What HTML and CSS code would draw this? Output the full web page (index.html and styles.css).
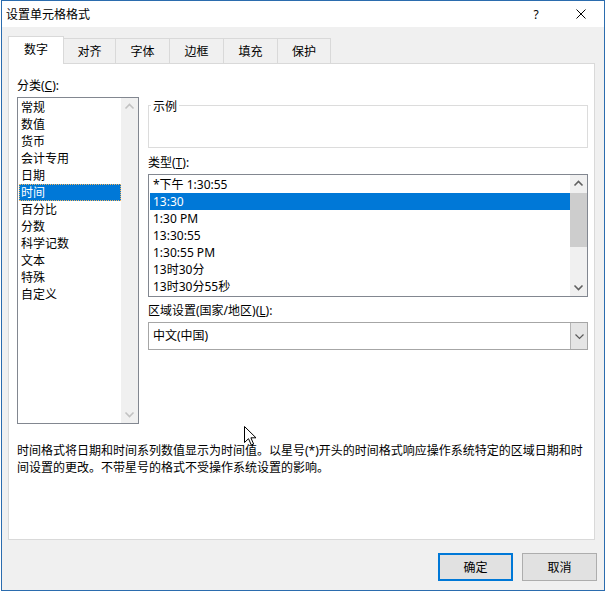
FILE: index.html
```html
<!DOCTYPE html>
<html lang="zh-CN">
<head>
<meta charset="utf-8">
<title>设置单元格格式</title>
<link rel="stylesheet" href="styles.css">
</head>
<body>
<div class="window">
  <div class="titlebar">
    <span class="title">设置单元格格式</span>
    <span class="help">?</span>
    <span class="close"><svg width="10" height="10" viewBox="0 0 10 10"><path d="M0.5 0.5 L9.5 9.5 M9.5 0.5 L0.5 9.5" stroke="#000" stroke-width="1" fill="none"/></svg></span>
  </div>
  <div class="body">
    <div class="tabs">
      <div class="tab active">数字</div>
      <div class="tab t-first">对齐</div>
      <div class="tab">字体</div>
      <div class="tab">边框</div>
      <div class="tab">填充</div>
      <div class="tab t-last">保护</div>
    </div>
    <div class="panel">
      <div class="cols">
        <div class="col-left">
          <div class="label">分类(<u>C</u>):</div>
          <div class="listbox cat">
            <div class="items">
              <div class="item">常规</div>
              <div class="item">数值</div>
              <div class="item">货币</div>
              <div class="item">会计专用</div>
              <div class="item">日期</div>
              <div class="item selected focus">时间</div>
              <div class="item">百分比</div>
              <div class="item">分数</div>
              <div class="item">科学记数</div>
              <div class="item">文本</div>
              <div class="item">特殊</div>
              <div class="item">自定义</div>
            </div>
            <div class="vscroll disabled">
              <span class="arrow"><svg width="17" height="17" viewBox="0 0 17 17"><polyline points="4.5,10.5 8.5,6.5 12.5,10.5" fill="none" stroke-width="1.6"/></svg></span>
              <span class="arrow"><svg width="17" height="17" viewBox="0 0 17 17"><polyline points="4.5,6.5 8.5,10.5 12.5,6.5" fill="none" stroke-width="1.6"/></svg></span>
            </div>
          </div>
        </div>
        <div class="col-right">
          <div class="sample"><span class="legend">示例</span></div>
          <div class="label label-type">类型(<u>T</u>):</div>
          <div class="listbox type">
            <div class="items">
              <div class="item">*下午 1:30:55</div>
              <div class="item selected">13:30</div>
              <div class="item">1:30 PM</div>
              <div class="item">13:30:55</div>
              <div class="item">1:30:55 PM</div>
              <div class="item">13时30分</div>
              <div class="item">13时30分55秒</div>
            </div>
            <div class="vscroll">
              <span class="arrow"><svg width="17" height="17" viewBox="0 0 17 17"><polyline points="4.5,10.5 8.5,6.5 12.5,10.5" fill="none" stroke-width="1.6"/></svg></span>
              <span class="thumb"></span>
              <span class="track"></span>
              <span class="arrow"><svg width="17" height="17" viewBox="0 0 17 17"><polyline points="4.5,6.5 8.5,10.5 12.5,6.5" fill="none" stroke-width="1.6"/></svg></span>
            </div>
          </div>
          <div class="label label-locale">区域设置(国家/地区)(<u>L</u>):</div>
          <div class="combo">
            <span class="combo-text">中文(中国)</span>
            <span class="combo-btn"><svg width="15" height="15" viewBox="0 0 15 15"><polyline points="3.5,5.5 7.5,9.5 11.5,5.5" fill="none" stroke="#5a5a5a" stroke-width="1.2"/></svg></span>
          </div>
        </div>
      </div>
      <p class="desc">时间格式将日期和时间系列数值显示为时间值。以星号(*)开头的时间格式响应操作系统特定的区域日期和时<br>间设置的更改。不带星号的格式不受操作系统设置的影响。</p>
    </div>
    <div class="footer">
      <button class="btn btn-default">确定</button>
      <button class="btn">取消</button>
    </div>
  </div>
  <svg class="cursor" width="13" height="20" viewBox="0 0 13 20"><path d="M0.5 0.5 L0.5 16.5 L4.5 12.7 L7.3 19 L9.6 18 L6.9 11.8 L12 11.8 Z" fill="#fff" stroke="#000" stroke-width="1" stroke-linejoin="miter"/></svg>
</div>
</body>
</html>
```

FILE: styles.css
```css
* {
  box-sizing: border-box;
}

html, body {
  margin: 0;
  padding: 0;
}

body {
  width: 605px;
  height: 592px;
  overflow: hidden;
  background: #ffffff;
  font-family: "Noto Sans", "Noto Sans CJK SC", sans-serif;
  font-size: 12px;
  color: #000000;
}

.window {
  position: relative;
  margin-left: 1px;
  width: 604px;
  height: 591px;
  border: 1px solid #2b6cae;
  background: #f0f0f0;
  display: flex;
  flex-direction: column;
}

/* title bar */
.titlebar {
  height: 26px;
  flex: none;
  background: #ffffff;
  display: flex;
  align-items: center;
  padding: 0 18px 0 4px;
  line-height: 17px;
}

.title {
  flex: 1;
}

.help {
  width: 12px;
  text-align: center;
  font-size: 12px;
}

.close {
  display: flex;
  margin-left: 34px;
}

/* body */
.body {
  flex: 1;
  display: flex;
  flex-direction: column;
  padding: 9px 7px 0 6px;
}

.tabs {
  display: flex;
  align-items: flex-end;
  height: 27px;
  flex: none;
}

.tab {
  height: 25px;
  width: 54px;
  display: flex;
  align-items: center;
  justify-content: center;
  line-height: 17px;
  background: #f0f0f0;
  border-top: 1px solid #d9d9d9;
  border-right: 1px solid #d9d9d9;
}

.tab.t-first {
  width: 52px;
}

.tab.t-last {
  width: 53px;
}

.tab.active {
  position: relative;
  z-index: 1;
  width: 56px;
  height: 28px;
  margin-bottom: -1px;
  padding-bottom: 2px;
  background: #ffffff;
  border: 1px solid #d9d9d9;
  border-bottom: none;
}

.panel {
  height: 477px;
  flex: none;
  margin-right: 2px;
  background: #ffffff;
  border: 1px solid #d9d9d9;
  padding: 13px 6px 0 8px;
}

.cols {
  display: flex;
  gap: 9px;
  align-items: flex-start;
}

.col-left {
  width: 122px;
  flex: none;
}

.col-right {
  width: 440px;
  flex: none;
}

.label {
  height: 17px;
  line-height: 17px;
  white-space: nowrap;
}

.label u {
  text-underline-offset: 1px;
}

.listbox {
  display: flex;
  border: 1px solid #828790;
  background: #ffffff;
  margin-top: 3px;
}

.listbox .items {
  flex: 1;
  padding: 1px 0 1px 1px;
  overflow: hidden;
}

.item {
  height: 17px;
  line-height: 17px;
  white-space: nowrap;
  padding-left: 2px;
}

.type .item {
  padding-left: 3px;
}

.item.selected {
  background: #0078d7;
  color: #ffffff;
}

.item.focus {
  outline: 1px dotted #f4b560;
  outline-offset: -1px;
}

.listbox.cat {
  height: 327px;
}

.listbox.type {
  height: 123px;
}

.vscroll {
  width: 17px;
  flex: none;
  background: #f0f0f0;
  display: flex;
  flex-direction: column;
}

.vscroll .arrow {
  display: flex;
  width: 17px;
  height: 17px;
  flex: none;
}

.vscroll .arrow svg {
  stroke: #606060;
}

.vscroll.disabled {
  justify-content: space-between;
}

.vscroll.disabled .arrow svg {
  stroke: #c2c2c2;
}

.vscroll .thumb {
  display: block;
  height: 54px;
  margin-top: 1px;
  background: #cdcdcd;
  flex: none;
}

.vscroll .track {
  flex: 1;
}

/* sample group */
.sample {
  margin-top: 28px;
  height: 43px;
  border: 1px solid #dcdcdc;
}

.legend {
  display: block;
  width: fit-content;
  margin: -8px 0 0 2px;
  padding: 0 2px;
  line-height: 17px;
  background: #ffffff;
}

.label-type {
  margin-top: 6px;
}

.label-locale {
  margin-top: 5px;
}

.combo {
  margin-top: 3px;
  height: 28px;
  display: flex;
  border: 1px solid #a6a6a6;
  background: #ffffff;
}

.combo-text {
  flex: 1;
  line-height: 26px;
  padding-left: 4px;
}

.combo-btn {
  width: 17px;
  display: flex;
  align-items: center;
  justify-content: center;
  background: #e5e5e5;
  border-left: 1px solid #b5b5b5;
}

.desc {
  margin: 18px 0 0 0;
  line-height: 17px;
  white-space: nowrap;
}

/* footer */
.footer {
  display: flex;
  justify-content: flex-end;
  gap: 9px;
  margin-top: 13px;
}

.btn {
  width: 75px;
  height: 28px;
  margin: 0;
  padding: 0;
  font-family: "Noto Sans", "Noto Sans CJK SC", sans-serif;
  font-size: 12px;
  color: #000000;
  background: #e1e1e1;
  border: 1px solid #adadad;
  line-height: 17px;
}

.btn-default {
  border: 2px solid #0078d7;
}

.cursor {
  position: absolute;
  left: 242px;
  top: 425px;
}
```
